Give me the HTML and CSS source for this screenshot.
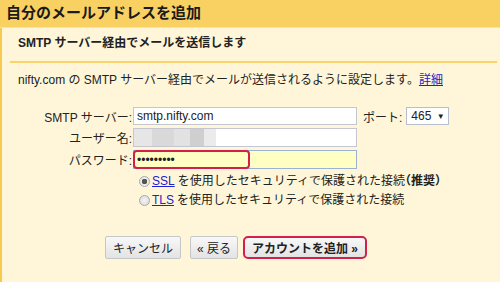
FILE: index.html
```html
<!DOCTYPE html>
<html lang="ja">
<head>
  <meta charset="UTF-8">
  <title>自分のメールアドレスを追加</title>
  <link rel="stylesheet" href="styles.css">
</head>
<body>
  <div class="dialog">
    <div class="title">自分のメールアドレスを追加</div>
    <div class="panel">
      <div class="step">SMTP サーバー経由でメールを送信します</div>
      <p class="desc">nifty.com の SMTP サーバー経由でメールが送信されるように設定します。<a href="#">詳細</a></p>

      <div class="form">
        <div class="row">
          <label>SMTP サーバー:</label>
          <input class="field" type="text" value="smtp.nifty.com">
          <label class="port-label">ポート:</label>
          <span class="select">465 <span class="arrow">▼</span></span>
        </div>
        <div class="row">
          <label>ユーザー名:</label>
          <span class="field user"><span class="blur"></span></span>
        </div>
        <div class="row">
          <label>パスワード:</label>
          <span class="pw-wrap">
            <input class="field pw" type="password" value="123456789">
            <span class="mark"></span>
          </span>
        </div>
      </div>

      <div class="radios">
        <div class="opt"><span class="radio on"></span><a href="#">SSL</a> を使用したセキュリティで保護された接続<b>（推奨）</b></div>
        <div class="opt"><span class="radio"></span><a href="#">TLS</a> を使用したセキュリティで保護された接続</div>
      </div>

      <div class="buttons">
        <button class="btn">キャンセル</button>
        <button class="btn back">« 戻る</button>
        <button class="btn add">アカウントを追加 »</button>
      </div>
    </div>
  </div>
</body>
</html>
```
FILE: styles.css
```css
body { margin: 0; font-family: "Liberation Sans", "Noto Sans CJK JP", sans-serif; font-size: 12px; color: #222; background: #fff6d9; }
.dialog { width: 500px; height: 282px; overflow: hidden; }
.title { background: #f9d163; height: 27px; line-height: 26px; padding-left: 6px; font-size: 15px; font-weight: bold; color: #1a1a1a; border-bottom: 1px solid #fde49a; }
.panel { border-left: 2px solid #f6c94f; height: 254px; background: #fff6d9; }
.step { margin: 0 3px 0 8px; padding: 7px 0 10px 8px; line-height: 16px; font-weight: bold; border-bottom: 2px solid #f9d468; }
.desc { margin: 9px 0 0 16px; line-height: 16px; }
a { color: #2222cc; text-decoration: underline; }

.form { margin: 19px 0 0 16px; }
.row { display: flex; align-items: center; height: 18px; margin-bottom: 3px; }
.row label { width: 114px; padding-right: 1px; text-align: right; }
.field { box-sizing: border-box; width: 224px; height: 18px; border: 1px solid #c4c7cf; background: #fff; font: inherit; font-size: 12px; padding: 0 3px; color: #222; margin: 0; }
.row:nth-child(2), .row:nth-child(3) { height: 19px; }
.user { display: flex; height: 19px; padding: 0; }
.blur { width: 82px; height: 17px; background: linear-gradient(90deg, #e6e6e6 0 18px, #d9d9d9 18px 40px, #e2e2e2 40px 56px, #cfcfcf 56px 70px, #ebebeb 70px); }
.pw-wrap { position: relative; display: block; }
.pw { height: 19px; background: #ffffc4; border-color: #9db1d2; }
.mark { position: absolute; left: 0; top: 0; width: 117px; height: 19px; box-sizing: border-box; border: 2px solid #d3204a; border-radius: 4px; }
.port-label { width: auto !important; margin-left: 6px; text-align: left !important; }
.select { box-sizing: border-box; height: 18px; width: 43px; margin-left: 3px; border: 1px solid #b8bfcc; background: #fff; line-height: 16px; padding-left: 4px; }
.arrow { font-size: 8px; vertical-align: 1px; margin-left: 2px; }

.radios { margin: 3px 0 0 137px; }
.opt { display: flex; align-items: center; height: 19px; line-height: 19px; }
.radio { box-sizing: border-box; width: 11px; height: 11px; border-radius: 50%; border: 1px solid #a9a9a9; background: radial-gradient(circle, #f4f4f4, #d8d8d8); margin-right: 2px; }
.radio.on { background: radial-gradient(circle, #555 0 2.5px, #eaeaea 3px); }
.opt a { margin-right: 3px; }
.opt b { font-weight: bold; font-feature-settings: "halt"; }

.buttons { display: flex; margin: 26px 0 0 103px; }
.btn { box-sizing: border-box; height: 23px; padding: 0 7px; font: inherit; font-size: 12px; color: #222; border: 1px solid #c6c6c6; border-radius: 2px; background: linear-gradient(#f8f8f8, #e3e3e3); }
.back { margin-left: 9px; padding: 0 6px; }
.add { margin-left: 5px; padding: 0 7px; font-weight: bold; border: 2px solid #d3204a; border-radius: 5px; }
```
